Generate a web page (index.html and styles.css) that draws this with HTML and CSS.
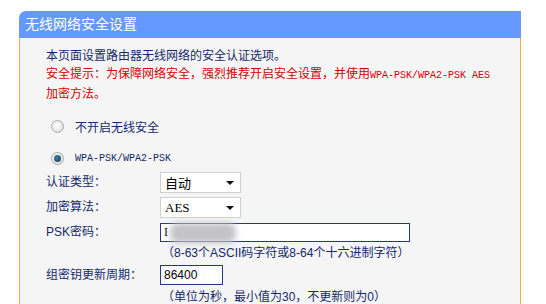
FILE: index.html
```html
<!DOCTYPE html>
<html>
<head>
  <meta charset="UTF-8">
  <title>无线网络安全设置</title>
  <link rel="stylesheet" href="styles.css">
</head>
<body>
  <div class="panel">
    <div class="panel-title">无线网络安全设置</div>
    <div class="panel-body">
      <p class="intro">本页面设置路由器无线网络的安全认证选项。<br>
        <span class="warn">安全提示：为保障网络安全，强烈推荐开启安全设置，并使用<span class="mono">WPA-PSK/WPA2-PSK AES</span><br>加密方法。</span>
      </p>

      <div class="radio-row first">
        <span class="radio"></span>
        <span>不开启无线安全</span>
      </div>
      <div class="radio-row">
        <span class="radio checked"></span>
        <span class="mono">WPA-PSK/WPA2-PSK</span>
      </div>

      <div class="field">
        <span class="label">认证类型：</span>
        <div class="select"><span>自动</span><i class="arrow"></i></div>
      </div>
      <div class="field">
        <span class="label">加密算法：</span>
        <div class="select"><span class="serif">AES</span><i class="arrow"></i></div>
      </div>
      <div class="field">
        <span class="label">PSK密码：</span>
        <div class="input wide"><span class="serif">I</span><span class="blur"></span></div>
      </div>
      <div class="hint">（8-63个ASCII码字符或8-64个十六进制字符）</div>
      <div class="field group">
        <span class="label">组密钥更新周期：</span>
        <div class="input short">86400</div>
      </div>
      <div class="hint last">（单位为秒，最小值为30，不更新则为0）</div>
    </div>
  </div>
</body>
</html>
```

FILE: styles.css
```css
body {
  margin: 0;
  background: #fff;
  font-family: "Liberation Sans", "Noto Sans CJK SC", sans-serif;
  font-size: 12px;
  color: #14286b;
  overflow: hidden;
}

.panel {
  width: 502px;
  margin: 11px 0 0 19px;
}

.panel-title {
  height: 27px;
  line-height: 27px;
  padding-left: 6px;
  background: #6699ff;
  color: #fff;
  font-size: 14px;
  border-top-left-radius: 7px;
}

.panel-body {
  background: #f5f5f5;
  border-left: 1px solid #f0a848;
  border-right: 1px solid #f0a848;
  padding: 9px 0 0 26px;
  height: 257px;
  overflow: hidden;
}

.intro {
  margin: 0;
  line-height: 18px;
}

.warn {
  color: #d40000;
}

.mono {
  font-family: "Liberation Mono", monospace;
  font-size: 10px;
}

.serif {
  font-family: "Liberation Serif", serif;
}

.radio-row {
  display: flex;
  align-items: center;
  height: 24px;
  margin-top: 8px;
  padding-left: 5px;
}

.radio-row.first {
  margin-top: 11px;
}

.radio {
  width: 11px;
  height: 11px;
  border: 1px solid #a8a8a8;
  border-radius: 50%;
  background: radial-gradient(circle at 40% 40%, #fff, #d8d8d8);
  margin-right: 11px;
  position: relative;
}

.radio.checked::after {
  content: "";
  position: absolute;
  left: 2px;
  top: 2px;
  width: 7px;
  height: 7px;
  border-radius: 50%;
  background: radial-gradient(circle at 40% 40%, #3d7fa3, #0f3a58);
}

.field {
  display: flex;
  align-items: center;
  height: 25px;
}

.label {
  width: 114px;
  line-height: 16px;
  margin-top: -1px;
}

.select {
  box-sizing: border-box;
  width: 81px;
  height: 21px;
  border: 1px solid #d0d0d0;
  background: #fff;
  display: flex;
  align-items: center;
  justify-content: space-between;
  padding: 0 6px 0 4px;
  color: #000;
  font-size: 13px;
}

.arrow {
  width: 0;
  height: 0;
  border-left: 4px solid transparent;
  border-right: 4px solid transparent;
  border-top: 4px solid #111;
}

.input {
  box-sizing: border-box;
  height: 19px;
  border: 1px solid #26397e;
  background: #fff;
  color: #000;
  padding-left: 3px;
  line-height: 17px;
  display: flex;
  align-items: center;
}

.input.wide {
  width: 250px;
}

.input.short {
  width: 63px;
  height: 20px;
}

.blur {
  width: 66px;
  height: 20px;
  margin-left: 2px;
  background: #c4c4c8;
  border-radius: 8px;
  filter: blur(3px);
}

.hint {
  padding-left: 114px;
  height: 16px;
  line-height: 16px;
  margin-left: 2px;
}

.field.group {
  margin-top: 3px;
  height: 22px;
}

.hint.last {
  margin-top: 3px;
}
```
